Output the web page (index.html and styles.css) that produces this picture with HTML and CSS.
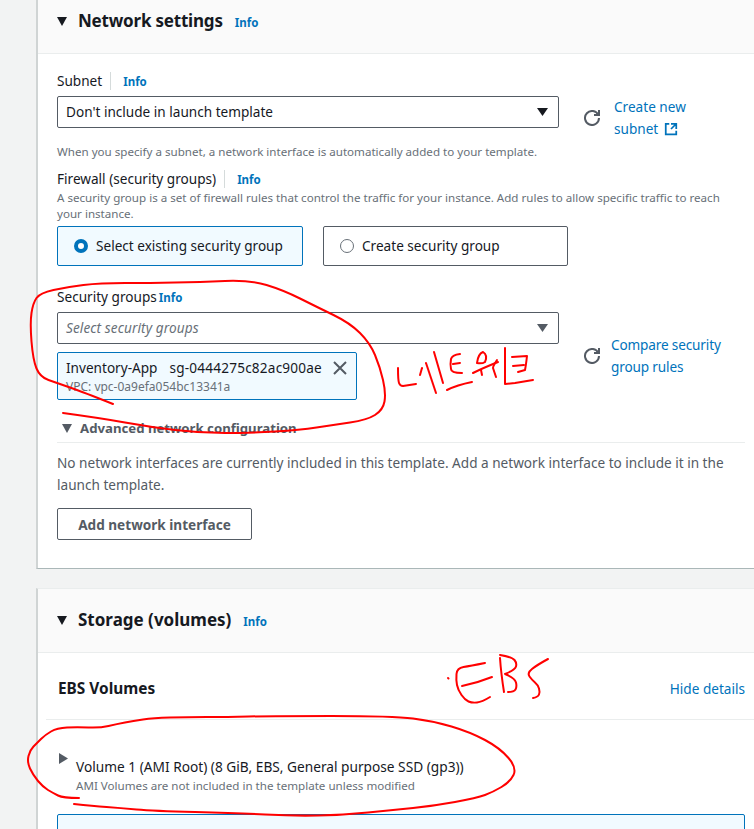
FILE: index.html
```html
<!DOCTYPE html>
<html>
<head>
  <meta charset="UTF-8">
  <title>Launch template</title>
  <link rel="stylesheet" href="styles.css">
</head>
<body>
  <!-- Network settings -->
  <section class="panel panel-network">
    <div class="panel-head panel-head-first">
      <svg class="caret" viewBox="0 0 10 9"><polygon points="0,0 10,0 5,9"/></svg>
      <h2 class="panel-title">Network settings</h2>
      <a class="info">Info</a>
    </div>
    <div class="panel-body">
      <div class="label-row">
        <span class="label label-split">Subnet</span>
        <a class="info">Info</a>
      </div>
      <div class="field-row">
        <div class="field-main">
          <div class="select">
            <span>Don't include in launch template</span>
            <svg class="select-caret" viewBox="0 0 11 8"><polygon points="0,0 11,0 5.5,8"/></svg>
          </div>
        </div>
        <div class="side-action">
          <svg class="icon" viewBox="0 0 16 16"><path d="M10 5h5V0"/><path d="M15 8a7 7 0 1 1-.68-3"/></svg>
          <a class="side-link side-link-subnet">Create new subnet
            <svg class="icon-ext" viewBox="0 0 16 16"><path d="M14 8v-6H8M14 2 8 8M6 2H2v12h12v-4"/></svg>
          </a>
        </div>
      </div>
      <p class="help help-subnet">When you specify a subnet, a network interface is automatically added to your template.</p>

      <div class="label-row label-row-firewall">
        <span class="label label-split">Firewall (security groups)</span>
        <a class="info">Info</a>
      </div>
      <p class="help">A security group is a set of firewall rules that control the traffic for your instance. Add rules to allow specific traffic to reach your instance.</p>
      <div class="tiles">
        <div class="tile tile-on"><span class="radio radio-on"></span>Select existing security group</div>
        <div class="tile"><span class="radio"></span>Create security group</div>
      </div>

      <div class="label-row label-row-groups">
        <span class="label">Security groups</span>
        <a class="info info-tight">Info</a>
      </div>
      <div class="field-row">
        <div class="field-main">
          <div class="select select-empty">
            <span>Select security groups</span>
            <svg class="select-caret" viewBox="0 0 11 8"><polygon points="0,0 11,0 5.5,8"/></svg>
          </div>
          <div class="token">
            <div class="token-text">
              <div class="token-name"><span>Inventory-App</span><span class="token-id">sg-0444275c82ac900ae</span></div>
              <div class="token-sub">VPC: vpc-0a9efa054bc13341a</div>
            </div>
            <svg class="icon" viewBox="0 0 16 16"><path d="M2 2l12 12M14 2L2 14"/></svg>
          </div>
        </div>
        <div class="side-action">
          <svg class="icon" viewBox="0 0 16 16"><path d="M10 5h5V0"/><path d="M15 8a7 7 0 1 1-.68-3"/></svg>
          <a class="side-link side-link-compare">Compare security group rules</a>
        </div>
      </div>

      <div class="advanced">
        <svg class="caret caret-muted" viewBox="0 0 10 9"><polygon points="0,0 10,0 5,9"/></svg>
        <span>Advanced network configuration</span>
      </div>
      <p class="note">No network interfaces are currently included in this template. Add a network interface to include it in the launch template.</p>
      <button class="btn">Add network interface</button>
    </div>
  </section>

  <!-- Storage -->
  <section class="panel">
    <div class="panel-head">
      <svg class="caret" viewBox="0 0 10 9"><polygon points="0,0 10,0 5,9"/></svg>
      <h2 class="panel-title panel-title-storage">Storage (volumes)</h2>
      <a class="info">Info</a>
    </div>
    <div class="ebs-head">
      <h3 class="ebs-title">EBS Volumes</h3>
      <a class="link">Hide details</a>
    </div>
    <div class="volume">
      <svg class="caret-side" viewBox="0 0 9 11"><polygon points="0,0 9,5.5 0,11"/></svg>
      <div class="volume-text">
        <div class="volume-name">Volume 1 (AMI Root) (8 GiB, EBS, General purpose SSD (gp3))</div>
        <div class="volume-sub">AMI Volumes are not included in the template unless modified</div>
      </div>
    </div>
    <div class="alert-box"></div>
  </section>

  <!-- Red pen marks drawn on top of the screenshot -->
  <svg class="scribble" viewBox="0 0 754 829">
    <path d="M113,404 Q83,392 70,387.5 Q57,383 48.5,380 Q40,377 36.5,368.5 Q33,360 31.5,341.5 Q30,323 31.5,313 Q33,303 36.5,298 Q40,293 53.5,290 Q67,287 83.5,285 Q100,283 125,283 Q150,283 175,282.5 Q200,282 225,281 Q250,280 266.5,285 Q283,290 300,298.5 Q317,307 333.5,315 Q350,323 360,333 Q370,343 375,355 Q380,367 383,380 Q386,393 384.5,401.5 Q383,410 375,415 Q367,420 350,422.5 Q333,425 316.5,427.5 Q300,430 275,431.5 Q250,433 225,433 Q200,433 175,430 Q150,427 125,422.5 Q100,418 63,413"/>
    <path d="M398,368 Q398,380 399,383 Q400,386 403,386 L416,384"/>
    <path d="M422,368 L420,375"/>
    <path d="M426,363 L436,393"/>
    <path d="M434,352 L443,383"/>
    <path d="M460,354 Q452,355 451,359 Q450,365 451,369 Q451,373 462,373"/>
    <path d="M453,364 L460,363"/>
    <path d="M447,390 Q457,385 472,382"/>
    <path d="M483,352 Q478,354 477,363 Q482,364 485,362 Q488,355 483,352"/>
    <path d="M473,373 Q483,368 498,362"/>
    <path d="M481,370 L482,375"/>
    <path d="M497,360 Q493,366 493,368 L496,377"/>
    <path d="M505,348 L505,384 L515,383 L533,380"/>
    <path d="M512,357 L527,356 Q526,365 525,370 L518,372"/>
    <path d="M513,366 L524,365"/>
    <path d="M448,678 L448.5,678.5"/>
    <path d="M485,663 Q470,666 463.5,667 Q457,668 456.5,674 Q456,680 457,685 Q458,690 461.5,695 Q465,700 468.5,701.5 Q472,703 477,702.5 Q482,702 490,697"/>
    <path d="M462,686 Q477,683 492,677"/>
    <path d="M500,658 Q501,673 504,692"/>
    <path d="M500,655 Q512,657 514.5,660 Q517,663 516,666.5 Q515,670 505,674 Q515,678 516,682.5 Q517,687 515.5,689.5 Q514,692 508,692"/>
    <path d="M548,659 Q537,665 532,669 Q527,673 529.5,676.5 Q532,680 535,682.5 Q538,685 539,688.5 Q540,692 539,694.5 Q538,697 533,698"/>
    <path d="M79,798 Q63,798 58,795.5 Q53,793 48,790 Q43,787 38,781 Q33,775 30,768.5 Q27,762 28.5,756 Q30,750 33.5,746.5 Q37,743 41,739 Q45,735 51,731.5 Q57,728 67,727.5 Q77,727 88.5,727.5 Q100,728 108.5,726 Q117,724 125,722.5 Q133,721 143,719.5 Q153,718 170,717.5 Q187,717 207,717 Q227,717 248.5,716.5 Q270,716 331.5,716 Q393,716 413,718.5 Q433,721 451.5,726.5 Q470,732 485,740 Q500,748 508.5,758 Q517,768 513.5,775 Q510,782 501.5,787 Q493,792 485,795 Q477,798 455,802 Q433,806 413,808 Q393,810 368,812.5 Q343,815 318,815.5 Q293,816 265,814.5 Q237,813 195,812 Q153,811 136.5,809.5 Q120,808 106.5,807 Q93,806 74,804"/>
  </svg>
</body>
</html>
```

FILE: styles.css
```css
/* Base styles */
* {
  margin: 0;
  padding: 0;
  box-sizing: border-box;
}

body {
  position: relative;
  height: 100vh;
  overflow: hidden;
  background: #f2f3f3;
  color: #16191f;
  font-family: 'Noto Sans', Arial, sans-serif;
  font-size: 13.6px;
  line-height: 22px;
}

/* Panels */
.panel {
  margin: 0 0 19px 36px;
  background: white;
  border-left: 2px solid #d0d4d4;
  border-top: 1px solid #eaeded;
  border-bottom: 1px solid #aab7b8;
}

.panel-network {
  margin-top: -11px;
}

.panel-head {
  display: flex;
  align-items: center;
  padding: 19px 20px 20px 19px;
  background: #fafafa;
  border-bottom: 1px solid #eaeded;
}

.panel-title {
  margin: 0 12px 0 11px;
  font-size: 17px;
  line-height: 24px;
  letter-spacing: -0.2px;
  font-weight: 700;
}

.panel-title-storage {
  letter-spacing: 0;
}

.panel-head .info {
  margin-top: 3px;
}

.panel-body {
  padding: 16px 9px 28px 19px;
}

.caret {
  width: 10px;
  height: 9px;
  fill: #16191f;
  flex: none;
}

.caret-muted {
  fill: #545b64;
}

.caret-side {
  width: 9px;
  height: 11px;
  fill: #545b64;
  flex: none;
}

/* Labels and links */
.label-row {
  display: flex;
  align-items: center;
  height: 22px;
}

.label-row-firewall {
  margin-top: 8px;
}

.label-row-groups {
  margin-top: 20px;
}

.label-split {
  padding-right: 8px;
  margin-right: 12px;
  border-right: 1px solid #d5dbdb;
  line-height: 18px;
}

.info {
  color: #0073bb;
  font-size: 11.5px;
  line-height: 16px;
  font-weight: 700;
}

.label-row .info {
  margin-top: 1px;
}

.label-row .info-tight {
  margin-left: 2px;
}

.link,
.side-link {
  color: #0073bb;
}

.help {
  width: 680px;
  color: #687078;
  font-size: 11.6px;
  line-height: 16px;
}

.help-subnet {
  margin-top: 4px;
}

/* Field with an action beside it */
.field-row {
  display: grid;
  grid-template-columns: 502px 170px;
  column-gap: 25px;
  align-items: center;
  margin-top: 4px;
}

.field-main {
  align-self: start;
}

.select {
  display: flex;
  justify-content: space-between;
  align-items: center;
  height: 32px;
  padding: 0 10px 0 8px;
  border: 1px solid #545b64;
  border-radius: 2px;
  background: white;
}

.select-caret {
  width: 11px;
  height: 8px;
  fill: #16191f;
}

.select-empty {
  color: #687078;
  font-style: italic;
  letter-spacing: 0.1px;
}

.select-empty .select-caret {
  fill: #545b64;
}

.side-action {
  display: flex;
  align-items: center;
}

.icon {
  width: 16px;
  height: 16px;
  fill: none;
  stroke: #545b64;
  stroke-width: 2;
  flex: none;
}

.icon-ext {
  width: 14px;
  height: 14px;
  margin-left: 2px;
  vertical-align: -2px;
  fill: none;
  stroke: #0073bb;
  stroke-width: 2;
}

.side-link-subnet {
  margin-left: 14px;
  width: 90px;
}

.side-link-compare {
  margin-left: 11px;
  width: 125px;
  letter-spacing: -0.15px;
}

/* Radio tiles */
.tiles {
  display: grid;
  grid-template-columns: 246px 245px;
  column-gap: 20px;
  margin-top: 4px;
}

.tile {
  display: flex;
  align-items: center;
  gap: 8px;
  height: 40px;
  padding-left: 16px;
  border: 1px solid #545b64;
  border-radius: 2px;
}

.tile-on {
  background: #f1faff;
  border-color: #0073bb;
}

.radio {
  width: 14px;
  height: 14px;
  border: 1px solid #687078;
  border-radius: 50%;
  background: white;
  flex: none;
}

.radio-on {
  border: 4px solid #0073bb;
}

/* Selected security group */
.token {
  display: flex;
  justify-content: space-between;
  align-items: flex-start;
  width: 300px;
  height: 48px;
  margin-top: 8px;
  padding: 4px 8px;
  background: #f1faff;
  border: 1px solid #0073bb;
  border-radius: 2px;
}

.token .icon {
  margin-top: 3px;
}

.token-name {
  display: flex;
  gap: 12px;
}

.token-id {
  letter-spacing: 0.2px;
}

.token-sub {
  color: #687078;
  font-size: 12px;
  line-height: 16px;
}

/* Advanced section */
.advanced {
  display: flex;
  align-items: center;
  gap: 8px;
  margin: 17px 0 0 5px;
  padding-bottom: 4px;
  color: #545b64;
  font-size: 13.2px;
  font-weight: 700;
  position: relative;
}

.advanced::after {
  content: "";
  position: absolute;
  left: -5px;
  right: 0;
  bottom: 0;
  height: 1px;
  background: #eaeded;
}

.note {
  margin-top: 9px;
  color: #545b64;
}

.btn {
  display: block;
  width: 195px;
  height: 32px;
  margin-top: 12px;
  background: white;
  border: 1px solid #545b64;
  border-radius: 2px;
  color: #545b64;
  font-family: inherit;
  font-size: 13.6px;
  font-weight: 700;
}

/* EBS volumes */
.ebs-head {
  display: flex;
  justify-content: space-between;
  align-items: center;
  height: 67px;
  margin-left: 8px;
  padding: 5px 9px 0 12px;
  border-bottom: 1px solid #eaeded;
}

.ebs-title {
  font-size: 15.4px;
  font-weight: 700;
}

.volume {
  display: flex;
  padding: 33px 0 0 21px;
}

.volume-text {
  margin: 3px 0 0 8px;
}

.volume-name {
  font-size: 13.7px;
}

.volume-sub {
  color: #687078;
  font-size: 11.6px;
  line-height: 16px;
}

.alert-box {
  height: 60px;
  margin: 20px 9px 0 19px;
  background: #f1faff;
  border: 1px solid #0073bb;
  border-radius: 2px;
}

/* Pen marks */
.scribble {
  position: absolute;
  left: 0;
  top: 0;
  width: 754px;
  height: 829px;
  pointer-events: none;
}

.scribble path {
  fill: none;
  stroke: #f00;
  stroke-width: 2;
  stroke-linejoin: round;
  stroke-linecap: round;
}
```
